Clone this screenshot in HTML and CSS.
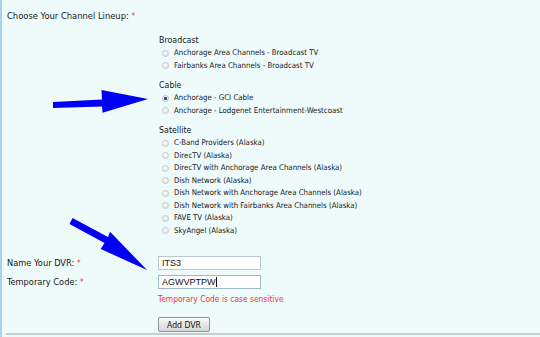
FILE: index.html
```html
<!DOCTYPE html>
<html lang="en">
<head>
    <meta charset="UTF-8">
    <title>Add DVR</title>
    <link rel="stylesheet" href="styles.css">
</head>
<body>
    <div class="page">
        <form class="dvr-form">
            <div class="lineup-label">Choose Your Channel Lineup: <span class="req">*</span></div>

            <div class="lineup-groups">
                <div class="group">
                    <div class="group-title">Broadcast</div>
                    <label class="option"><input type="radio" name="lineup"> Anchorage Area Channels - Broadcast TV</label>
                    <label class="option"><input type="radio" name="lineup"> Fairbanks Area Channels - Broadcast TV</label>
                </div>
                <div class="group">
                    <div class="group-title">Cable</div>
                    <label class="option"><input type="radio" name="lineup" checked> Anchorage - GCI Cable</label>
                    <label class="option"><input type="radio" name="lineup"> Anchorage - Lodgenet Entertainment-Westcoast</label>
                </div>
                <div class="group">
                    <div class="group-title">Satellite</div>
                    <label class="option"><input type="radio" name="lineup"> C-Band Providers (Alaska)</label>
                    <label class="option"><input type="radio" name="lineup"> DirecTV (Alaska)</label>
                    <label class="option"><input type="radio" name="lineup"> DirecTV with Anchorage Area Channels (Alaska)</label>
                    <label class="option"><input type="radio" name="lineup"> Dish Network (Alaska)</label>
                    <label class="option"><input type="radio" name="lineup"> Dish Network with Anchorage Area Channels (Alaska)</label>
                    <label class="option"><input type="radio" name="lineup"> Dish Network with Fairbanks Area Channels (Alaska)</label>
                    <label class="option"><input type="radio" name="lineup"> FAVE TV (Alaska)</label>
                    <label class="option"><input type="radio" name="lineup"> SkyAngel (Alaska)</label>
                </div>
            </div>

            <div class="field-grid">
                <label class="field-label" for="dvrName">Name Your DVR: <span class="req">*</span></label>
                <input type="text" id="dvrName" class="text-input" value="ITS3">

                <label class="field-label" for="tempCode">Temporary Code: <span class="req">*</span></label>
                <div class="text-input code-input" id="tempCode">AGWVPTPW<span class="caret"></span></div>

                <div></div>
                <div class="hint">Temporary Code is case sensitive</div>

                <div></div>
                <div><button type="button" class="add-button">Add DVR</button></div>
            </div>
        </form>

        <svg class="arrows" width="540" height="337" viewBox="0 0 540 337">
            <!-- arrow pointing at the GCI Cable option -->
            <polygon fill="#0000f4" points="53,102 102,99.5 101.5,90 148,99 102.5,112.7 102,106.5 53,108"/>
            <!-- arrow pointing at the DVR name box -->
            <polygon fill="#0000f4" points="72.5,218 108,237 110,231.7 147,270 100.7,249 104.5,243 69.5,224"/>
        </svg>
    </div>
</body>
</html>
```

FILE: styles.css
```css
body {
    margin: 0;
    background-color: #effbfb;
    font-family: "DejaVu Sans Condensed", "DejaVu Sans", sans-serif;
    font-stretch: condensed;
    color: #161616;
}

.page {
    position: relative;
    width: 538px;
    height: 337px;
    border-left: 2px solid #a8d2ec;
    overflow: hidden;
}

.dvr-form {
    margin-left: 4px;
    padding-top: 9px;
    border-bottom: 2px solid #c4cccc;
    height: 324px;
}

.req {
    color: #e8343a;
    font-size: 8px;
}

.lineup-label {
    padding-left: 1px;
    font-size: 9.3px;
    line-height: 13px;
}

.lineup-groups {
    margin-left: 153px;
    margin-top: 11px;
}

.group {
    margin-bottom: 7px;
}

.group-title {
    font-size: 8.8px;
    line-height: 13px;
}

.option {
    display: flex;
    align-items: center;
    font-size: 7.8px;
    line-height: 12.5px;
    white-space: nowrap;
}

.option input[type="radio"] {
    appearance: none;
    width: 7px;
    height: 7px;
    margin: 0 5px 0 3px;
    border: 1px solid #c2c6c8;
    border-radius: 50%;
    background: radial-gradient(circle at 40% 35%, #ffffff, #dcdfe0);
    box-sizing: border-box;
}

.option input[type="radio"]:checked {
    background: radial-gradient(circle, #1e4e8c 0, #1e4e8c 1.3px, #e8eaeb 1.8px);
}

.field-grid {
    display: grid;
    grid-template-columns: 151px auto;
    row-gap: 4px;
    margin-top: 19px;
    padding-left: 1px;
}

.field-label {
    font-size: 9.2px;
    line-height: 14px;
    align-self: center;
}

.text-input {
    width: 103px;
    height: 14px;
    padding: 0 3px;
    border: 1px solid #b9c9d3;
    background-color: #fff;
    font-family: "Liberation Sans", Arial, sans-serif;
    font-size: 9px;
    line-height: 12px;
    color: #111;
    box-sizing: border-box;
    outline: none;
}

.code-input {
    display: flex;
    align-items: center;
    border-color: #9fb8cc;
}

.caret {
    display: inline-block;
    width: 1px;
    height: 10px;
    background-color: #111;
}

.hint {
    color: #f0343c;
    font-size: 8.4px;
    line-height: 12px;
    margin-top: -1px;
}

.add-button {
    margin-top: 8px;
    width: 52px;
    height: 15px;
    padding: 0;
    border: 1px solid #8e9496;
    border-radius: 2px;
    background: linear-gradient(#fbfbfb, #e4e4e4 50%, #d6d6d6);
    font-family: "DejaVu Sans Condensed", "DejaVu Sans", sans-serif;
    font-stretch: condensed;
    font-size: 8.6px;
    color: #111;
}

.arrows {
    position: absolute;
    left: -2px;
    top: 0;
}
```
